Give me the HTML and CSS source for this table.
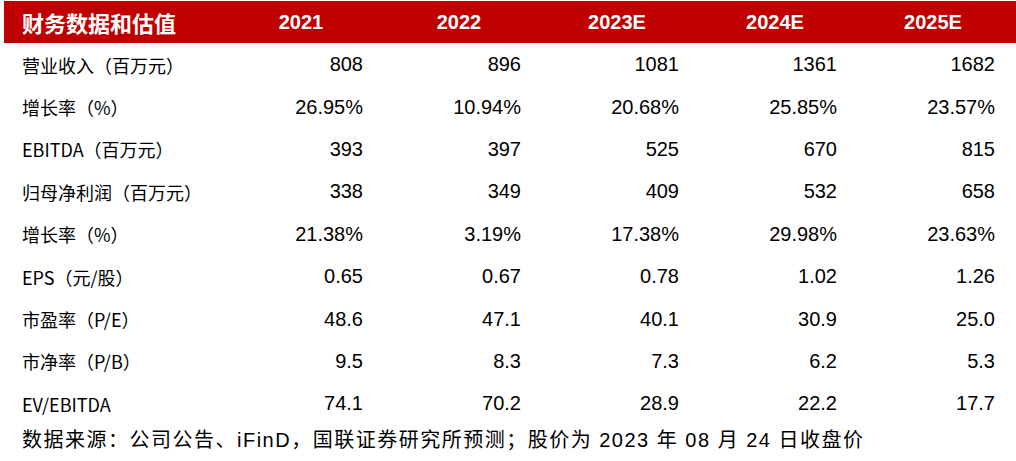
FILE: index.html
```html
<!DOCTYPE html>
<html lang="zh-CN">
<head>
<meta charset="utf-8">
<title>财务数据和估值</title>
<link rel="stylesheet" href="styles.css">
</head>
<body>
<div class="sheet">
  <div class="table">
    <div class="hd hd-label">财务数据和估值</div>
    <div class="hd">2021</div>
    <div class="hd">2022</div>
    <div class="hd">2023E</div>
    <div class="hd">2024E</div>
    <div class="hd">2025E</div>

    <div class="lbl">营业收入（百万元）</div>
    <div class="num">808</div><div class="num">896</div><div class="num">1081</div><div class="num">1361</div><div class="num">1682</div>

    <div class="lbl">增长率（%）</div>
    <div class="num">26.95%</div><div class="num">10.94%</div><div class="num">20.68%</div><div class="num">25.85%</div><div class="num">23.57%</div>

    <div class="lbl">EBITDA（百万元）</div>
    <div class="num">393</div><div class="num">397</div><div class="num">525</div><div class="num">670</div><div class="num">815</div>

    <div class="lbl">归母净利润（百万元）</div>
    <div class="num">338</div><div class="num">349</div><div class="num">409</div><div class="num">532</div><div class="num">658</div>

    <div class="lbl">增长率（%）</div>
    <div class="num">21.38%</div><div class="num">3.19%</div><div class="num">17.38%</div><div class="num">29.98%</div><div class="num">23.63%</div>

    <div class="lbl">EPS（元/股）</div>
    <div class="num">0.65</div><div class="num">0.67</div><div class="num">0.78</div><div class="num">1.02</div><div class="num">1.26</div>

    <div class="lbl">市盈率（P/E）</div>
    <div class="num">48.6</div><div class="num">47.1</div><div class="num">40.1</div><div class="num">30.9</div><div class="num">25.0</div>

    <div class="lbl">市净率（P/B）</div>
    <div class="num">9.5</div><div class="num">8.3</div><div class="num">7.3</div><div class="num">6.2</div><div class="num">5.3</div>

    <div class="lbl">EV/EBITDA</div>
    <div class="num">74.1</div><div class="num">70.2</div><div class="num">28.9</div><div class="num">22.2</div><div class="num">17.7</div>
  </div>
  <div class="source">数据来源：公司公告、iFinD，国联证券研究所预测；股价为 2023 年 08 月 24 日收盘价</div>
</div>
</body>
</html>
```

FILE: styles.css
```css
html, body {
  margin: 0;
  padding: 0;
  background: #ffffff;
}

.sheet {
  padding: 1px 0 0 4px;
  color: #000000;
}

.table {
  display: grid;
  grid-template-columns: 222px repeat(5, 158px);
  grid-template-rows: 42px;
  grid-auto-rows: 42.4px;
}

.hd {
  background: #c00000;
  color: #ffffff;
  font-family: "Liberation Sans", "Noto Sans CJK SC", sans-serif;
  font-weight: 700;
  font-size: 20px;
  display: flex;
  align-items: center;
  justify-content: center;
  padding-right: 8px;
}

.hd-label {
  justify-content: flex-start;
  padding: 0 0 0 18px;
  font-family: "Noto Sans CJK SC", sans-serif;
  font-size: 22px;
}

.lbl {
  font-family: "Noto Sans CJK SC", sans-serif;
  font-size: 18px;
  display: flex;
  align-items: center;
  padding-left: 18px;
  margin-top: 1px;
}

.num {
  font-family: "Liberation Sans", sans-serif;
  font-size: 20px;
  display: flex;
  align-items: center;
  justify-content: flex-end;
  padding-right: 21px;
  margin-top: 1px;
}

.source {
  font-family: "Liberation Sans", "Noto Sans CJK SC", sans-serif;
  font-size: 20px;
  letter-spacing: 1.5px;
  padding-left: 18px;
  height: 30px;
  line-height: 30px;
}
```
